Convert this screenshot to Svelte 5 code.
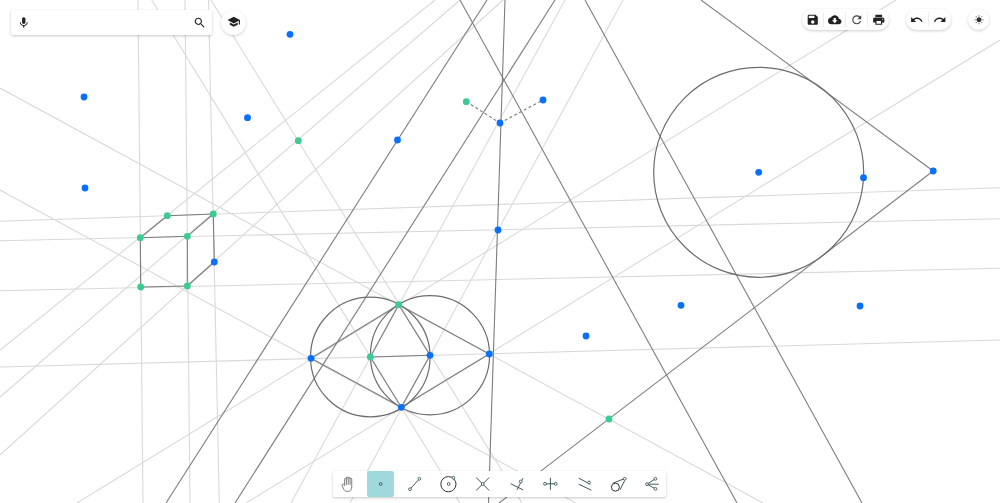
<script>
  const light = [
    [138,0,143,503],[185,0,190,503],[208.5,0,219.3,503],
    [0,221.3,1000,187.7],[0,240.7,1000,218.7],[0,290.7,1000,268.3],[0,367,1000,340],
    [0,88,763,503],[0,190,576,503],
    [211,0,522,503],[151.7,0,460,503],
    [0,350,435,0],[0,397,460,0],[0,455,503,0],
    [77,503,896,0],[246,503,1000,40],
    [291,503,565,0],[350,503,623,0]
  ];
  const dark = [
    [487,0,166,503],[555,0,235,503],[505,0,488.5,503],
    [460,0,737,503],[585,0,862,503],
    [701,0,933.2,171],[933.2,171,499,503],
    [167.3,215.7,213.3,214],[140.3,237.7,187.3,236.3],[140.3,237.7,167.3,215.7],[187.3,236.3,213.3,214],
    [140.3,237.7,140.7,287],[187.3,236.3,187.3,286],[213.3,214,214.3,262],
    [140.7,287,187.3,286],[187.3,286,214.3,262],
    [311,358.3,398.7,304.7],[398.7,304.7,489.3,354],[489.3,354,401.3,407.3],[401.3,407.3,311,358.3],
    [370.3,357,398.7,304.7],[398.7,304.7,430,355.3],[430,355.3,401.3,407.3],[401.3,407.3,370.3,357],
    [370.3,357,430,355.3]
  ];
  const dashed = [[466.3,101.7,500,123],[500,123,543,100]];
  const circles = [[758.7,172.3,105],[370.3,357,59.8],[430,355.3,59.6]];
  const blue = [
    [290,34.3],[84,97],[85,188],[247.5,117.7],[397.5,140],[500,123],[543,100],[498,230],
    [758.7,172.3],[863.5,177.7],[933.2,171],[681,305.3],[860,306],[586,336],[214.3,262],
    [311,358.3],[430,355.3],[489.3,354],[401.3,407.3]
  ];
  const green = [
    [298.3,140.7],[466.3,101.7],[167.3,215.7],[213.3,214],[140.3,237.7],[187.3,236.3],
    [140.7,287],[187.3,286],[398.7,304.7],[370.3,357],[609,419]
  ];
  const fileIcons = [
    { label: 'Save', d: 'M17 3H5c-1.11 0-2 .9-2 2v14c0 1.1.89 2 2 2h14c1.1 0 2-.9 2-2V7l-4-4zm-5 16c-1.66 0-3-1.34-3-3s1.34-3 3-3 3 1.34 3 3-1.34 3-3 3zm3-10H5V5h10v4z' },
    { label: 'Download', d: 'M19.35 10.04C18.67 6.59 15.64 4 12 4 9.11 4 6.6 5.64 5.35 8.04 2.34 8.36 0 10.91 0 14c0 3.31 2.69 6 6 6h13c2.76 0 5-2.24 5-5 0-2.64-2.05-4.78-4.65-4.96zM17 13l-5 5-5-5h3V9h4v4h3z' },
    { label: 'Refresh', d: 'M17.65 6.35C16.2 4.9 14.21 4 12 4c-4.42 0-7.99 3.58-7.99 8s3.57 8 7.99 8c3.73 0 6.84-2.55 7.73-6h-2.08c-.82 2.33-3.04 4-5.65 4-3.31 0-6-2.69-6-6s2.69-6 6-6c1.66 0 3.14.69 4.22 1.78L13 11h7V4l-2.35 2.35z' },
    { label: 'Print', d: 'M19 8H5c-1.66 0-3 1.34-3 3v6h4v4h12v-4h4v-6c0-1.66-1.34-3-3-3zm-3 11H8v-5h8v5zm3-7c-.55 0-1-.45-1-1s.45-1 1-1 1 .45 1 1-.45 1-1 1zm-1-9H6v4h12V3z' }
  ];
  const historyIcons = [
    { label: 'Undo', d: 'M12.5 8c-2.65 0-5.05.99-6.9 2.6L2 7v9h9l-3.62-3.62c1.39-1.16 3.16-1.88 5.12-1.88 3.54 0 6.55 2.31 7.6 5.5l2.37-.78C21.08 11.03 17.15 8 12.5 8z' },
    { label: 'Redo', d: 'M18.4 10.6C16.55 8.99 14.15 8 11.5 8c-4.65 0-8.58 3.03-9.96 7.22L3.9 16c1.05-3.19 4.05-5.5 7.6-5.5 1.95 0 3.73.72 5.12 1.88L13 16h9V7l-3.6 3.6z' }
  ];
  // Tool icons: coordinates in a 26x26 box centred on each button
  const tools = [
    { label: 'Move', hand: true, lines: [], dots: [], rings: [] },
    { label: 'Point', active: true, lines: [], dots: [[13,13]], rings: [] },
    { label: 'Line', lines: [[8.3,18.2,17.7,7.8]], dots: [[8.3,18.2],[17.7,7.8]], rings: [] },
    { label: 'Circle', lines: [], dots: [[13,13],[17.7,6.8]], rings: [[12.7,13.2,7.6]] },
    { label: 'Intersection', lines: [[6.5,6.5,19.5,19.5],[19.5,6.5,6.5,19.5]], dots: [[13,13]], rings: [] },
    { label: 'Perpendicular', lines: [[7,12.8,19.3,18.8],[13.3,18.8,19.3,7.2]], dots: [[17,10.5]], rings: [] },
    { label: 'Bisector', lines: [[7.3,12.8,18,12.8],[12.7,6.8,12.7,18.8]], dots: [[7.3,12.8],[18,12.8]], rings: [] },
    { label: 'Parallel', lines: [[7,7.2,18.7,13.2],[7,13.2,19.7,19.2]], dots: [[17.3,11.5]], rings: [] },
    { label: 'Tangent', lines: [[7.2,12.2,18.3,7.8],[14.3,18.8,19,9.5]], dots: [[19,7.8]], rings: [[9.7,16.2,4]] },
    { label: 'Polar', lines: [[7.3,13.2,19,13.2],[7.3,13.2,15.7,7.8],[7.3,13.2,15.7,17.8]], dots: [[7.3,13.2],[15.7,7.8],[15.7,17.8]], rings: [] }
  ];
</script>

<div class="stage">
  <svg class="canvas" width="1000" height="503" viewBox="0 0 1000 503" aria-label="Geometry construction">
    {#each light as l}<line x1={l[0]} y1={l[1]} x2={l[2]} y2={l[3]} class="light" />{/each}
    {#each dark as l}<line x1={l[0]} y1={l[1]} x2={l[2]} y2={l[3]} class="dark" />{/each}
    {#each dashed as l}<line x1={l[0]} y1={l[1]} x2={l[2]} y2={l[3]} class="dashed" />{/each}
    {#each circles as c}<circle cx={c[0]} cy={c[1]} r={c[2]} class="curve" />{/each}
    {#each blue as p}<circle cx={p[0]} cy={p[1]} r="3.4" class="free" />{/each}
    {#each green as p}<circle cx={p[0]} cy={p[1]} r="3.4" class="derived" />{/each}
  </svg>

  <div class="overlay">
    <header class="top">
      <div class="left">
        <div class="search">
          <svg class="mat" viewBox="0 0 24 24"><path d="M12 14c1.66 0 2.99-1.34 2.99-3L15 5c0-1.66-1.34-3-3-3S9 3.34 9 5v6c0 1.66 1.34 3 3 3zm5.3-3c0 3-2.54 5.1-5.3 5.1S6.7 14 6.7 11H5c0 3.41 2.72 6.23 6 6.72V21h2v-3.28c3.28-.48 6-3.3 6-6.72h-1.7z" /></svg>
          <svg class="mat" viewBox="0 0 24 24"><path d="M15.5 14h-.79l-.28-.27C15.41 12.59 16 11.11 16 9.5 16 5.91 13.09 3 9.5 3S3 5.91 3 9.5 5.91 16 9.5 16c1.61 0 3.09-.59 4.23-1.57l.27.28v.79l5 4.99L20.49 19l-4.99-5zm-6 0C7.01 14 5 11.99 5 9.5S7.01 5 9.5 5 14 7.01 14 9.5 11.99 14 9.5 14z" /></svg>
        </div>
        <div class="round hat">
          <svg class="mat" viewBox="0 0 24 24"><path d="M5 13.18v4L12 21l7-3.82v-4L12 17l-7-3.82zM12 3L1 9l11 6 9-4.91V17h2V9L12 3z" /></svg>
        </div>
      </div>
      <div class="right">
        <div class="pill files">
          {#each fileIcons as ic}
            <div class="cell" class:thin={ic.label === 'Refresh'}><svg class="mat" viewBox="0 0 24 24" aria-label={ic.label}><path d={ic.d} /></svg></div>
          {/each}
        </div>
        <div class="pill history">
          {#each historyIcons as ic}
            <div class="cell"><svg class="mat" viewBox="0 0 24 24" aria-label={ic.label}><path d={ic.d} /></svg></div>
          {/each}
        </div>
        <div class="round theme">
          <svg class="sun" viewBox="0 0 24 24"><path d="M6.76 4.84l-1.8-1.79-1.41 1.41 1.79 1.79 1.42-1.41zM4 10.5H1v2h3v-2zm9-9.95h-2V3.5h2V.55zm7.45 3.91l-1.41-1.41-1.79 1.79 1.41 1.41 1.79-1.79zm-3.21 13.7l1.79 1.8 1.41-1.41-1.8-1.79-1.4 1.4zM20 10.5v2h3v-2h-3zm-8-5c-3.31 0-6 2.69-6 6s2.69 6 6 6 6-2.69 6-6-2.69-6-6-6zm-1 16.95h2V19.5h-2v2.95zm-7.45-3.91l1.41 1.41 1.79-1.8-1.41-1.41-1.79 1.8z" /></svg>
        </div>
      </div>
    </header>

    <nav class="tools">
      {#each tools as t}
        <div class="tool" class:active={t.active} title={t.label}>
          <svg width="26" height="26" viewBox="-0.7 0 26 26">
            {#if t.hand}
              <g transform="translate(1.2 -0.6) scale(1.08)">
                <path class="hand" d="M9 13.5V8.2c0-1.2 1.6-1.2 1.6 0V7c0-1.3 1.7-1.3 1.7 0v.2c0-1.2 1.7-1.2 1.7 0v.8c0-1.1 1.6-1.1 1.6 0v7.2c0 2.6-1.5 4.3-3.8 4.3-1.8 0-2.8-.8-3.6-2L6.7 14c-.6-1.1.8-2 1.6-1L9 14" />
                <path class="hand" d="M10.6 8.2V13M12.3 7.2V13M14 8V13" />
              </g>
            {/if}
            {#each t.lines as l}<line x1={l[0]} y1={l[1]} x2={l[2]} y2={l[3]} class="ti-line" />{/each}
            {#each t.rings as r}<circle cx={r[0]} cy={r[1]} r={r[2]} class="ti-ring" />{/each}
            {#each t.dots as d}<circle cx={d[0]} cy={d[1]} r="1.4" class="ti-dot" />{/each}
          </svg>
        </div>
      {/each}
    </nav>
  </div>
</div>

<style>
  :global(body) { margin: 0; background: #fff; overflow: hidden; }
  .stage { position: relative; width: 1000px; height: 503px; overflow: hidden; background: #fff; font-family: "Roboto", sans-serif; }
  .canvas { position: absolute; inset: 0; display: block; }
  .light { stroke: #d9d9d9; stroke-width: 1.1; fill: none; }
  .dark { stroke: #7d7d7d; stroke-width: 1.1; fill: none; }
  .dashed { stroke: #7d7d7d; stroke-width: 1.1; stroke-dasharray: 3 2.4; fill: none; }
  .curve { stroke: #6c6c6c; stroke-width: 1.2; fill: none; }
  .free { fill: #0a6ffb; }
  .derived { fill: #3ccb92; }

  .overlay { position: absolute; inset: 0; display: flex; flex-direction: column; justify-content: space-between; box-sizing: border-box; padding: 9px 11px 6.5px; }
  .top { display: flex; justify-content: space-between; align-items: flex-start; }
  .left { display: flex; align-items: flex-start; gap: 9px; }
  .right { display: flex; align-items: flex-start; gap: 17px; }

  .mat { width: 13.5px; height: 13.5px; display: block; fill: #222; flex: none; }
  .search { width: 201px; height: 25px; margin-top: 1px; box-sizing: border-box; padding: 0 6px 0 5.5px; display: flex; align-items: center; justify-content: space-between; background: #fff; border-radius: 2px; box-shadow: 0 1px 3px rgba(0,0,0,.22); }
  .round { background: #fff; border-radius: 50%; display: flex; align-items: center; justify-content: center; box-shadow: 0 1px 3px rgba(0,0,0,.18); }
  .hat { width: 25px; height: 25px; margin-top: .5px; }
  .theme { width: 21px; height: 21px; }
  .sun { width: 10px; height: 10px; display: block; fill: #333; }

  .pill { display: flex; height: 21px; box-sizing: border-box; background: #fff; border-radius: 11px; box-shadow: 0 1px 3px rgba(0,0,0,.2); align-items: center; }
  .files { width: 87px; padding-left: .5px; }
  .history { width: 45px; }
  .cell { flex: 1; height: 15px; display: flex; align-items: center; justify-content: center; border-right: 1px solid #eee; }
  .cell:last-child { border-right: 0; }
  .thin .mat { fill: #444; }

  .tools { align-self: center; margin-right: 1.5px; display: flex; gap: 7.5px; height: 26px; background: #fff; border-radius: 2px; box-shadow: 0 1px 3px rgba(0,0,0,.22); }
  .tool { width: 26.5px; height: 26px; display: flex; align-items: center; justify-content: center; border-radius: 2px; }
  .tool.active { background: #9fd9dd; }
  .ti-line { stroke: #3d5a54; stroke-width: 1; fill: none; }
  .ti-ring { stroke: #333; stroke-width: 1; fill: none; }
  .ti-dot { stroke: #3d5a54; stroke-width: .9; fill: #fff; }
  .active .ti-dot { fill: #9fd9dd; }
  .hand { stroke: #777; stroke-width: .9; fill: none; stroke-linejoin: round; stroke-linecap: round; }
</style>
